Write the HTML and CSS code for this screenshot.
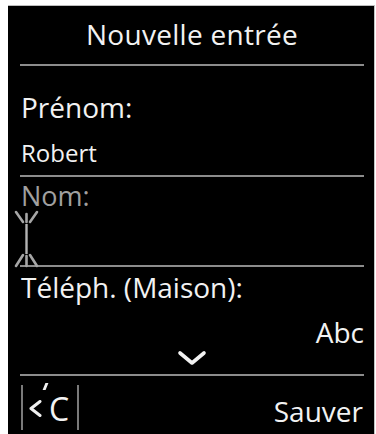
FILE: index.html
```html
<!DOCTYPE html>
<html lang="fr">
<head>
<meta charset="utf-8">
<link rel="stylesheet" href="styles.css">
</head>
<body>
<div class="screen">
  <div class="title">Nouvelle entrée</div>
  <div class="field field-first">
    <div class="label">Prénom:</div>
    <div class="value">Robert</div>
  </div>
  <div class="field field-active">
    <div class="label label-dim">Nom:</div>
    <svg class="cursor" width="30" height="58" viewBox="0 0 30 58">
      <path d="M2 2 L9 12 M23 2 L16 12 M12.5 4 L12.5 12" stroke="#a6a6a6" stroke-width="2.6" fill="none" stroke-linecap="round"/>
      <path d="M12.5 14 L12.5 44" stroke="#b4b4b4" stroke-width="2.4"/>
      <path d="M2 56 L9 45 M23 56 L16 45 M12.5 46 L12.5 56" stroke="#a6a6a6" stroke-width="2.6" fill="none" stroke-linecap="round"/>
    </svg>
  </div>
  <div class="field field-last">
    <div class="label">Téléph. (Maison):</div>
    <div class="mode">Abc</div>
    <div class="more">
      <svg width="30" height="16" viewBox="0 0 30 16"><path d="M3 3 L15 13 L27 3" stroke="#f2f2f2" stroke-width="3.6" fill="none" stroke-linecap="round" stroke-linejoin="round"/></svg>
    </div>
  </div>
  <div class="softkeys">
    <div class="backspace">
      <svg class="bs-arrow" width="13" height="17" viewBox="0 0 13 17"><path d="M11 1.5 L2 8.5 L11 15.5" stroke="#f0f0f0" stroke-width="3" fill="none" stroke-linecap="round" stroke-linejoin="round"/></svg>
      <span class="bs-c">C</span>
      <span class="bs-acc"></span>
    </div>
    <div class="save">Sauver</div>
  </div>
</div>
</body>
</html>
```
FILE: styles.css
```css
html, body {
  background: #ffffff;
}
body {
  margin: 5px 1px 0 8px;
  font-family: "Open Sans", "Liberation Sans", sans-serif;
  color: #f2f2f2;
}
.screen {
  background: #000;
  height: 429px;
  padding: 0 10px 0 12px;
  box-sizing: border-box;
  border-right: 1px solid #c4c4c4;
  border-top: 1px solid #bdbdbd;
}
.title {
  font-size: 28px;
  letter-spacing: 0.3px;
  text-align: center;
  line-height: 40px;
  padding: 8px 0 10px;
  border-bottom: 2px solid #8c8c8c;
}
.field {
  border-bottom: 2px solid #8c8c8c;
}
.label {
  font-size: 28px;
  line-height: 40px;
  padding-left: 1px;
}
.field-first {
  padding-top: 21px;
  padding-bottom: 6px;
}
.value {
  font-size: 24px;
  line-height: 32px;
  padding-left: 1px;
  margin-top: 10px;
}
.field-active {
  height: 90px;
  box-sizing: border-box;
  padding-top: 1px;
}
.label-dim {
  color: #a0a0a0;
  font-size: 27px;
  line-height: 36px;
}
.cursor {
  display: block;
  margin: -4px 0 0 -6px;
}
.field-last {
  height: 109px;
  box-sizing: border-box;
}
.mode {
  text-align: right;
  font-size: 28px;
  line-height: 40px;
  margin-top: 5px;
}
.more {
  display: flex;
  justify-content: center;
  height: 16px;
  margin-top: -2px;
}
.softkeys {
  display: flex;
  justify-content: space-between;
  align-items: flex-end;
  height: 56px;
}
.backspace {
  position: relative;
  display: flex;
  align-items: flex-start;
  box-sizing: border-box;
  width: 58px;
  height: 45px;
  margin: 0 0 2px 1px;
  border-left: 2px solid #7a7a7a;
  border-right: 2px solid #7a7a7a;
  padding-left: 6px;
}
.bs-arrow {
  display: block;
  margin-top: 15px;
}
.bs-c {
  font-size: 32px;
  line-height: 36px;
  margin: 6px 0 0 7px;
}
.bs-acc {
  position: absolute;
  left: 21px;
  top: -2px;
  width: 2.5px;
  height: 7px;
  background: #f0f0f0;
  transform: skewX(-22deg);
}
.save {
  font-size: 28px;
  line-height: 40px;
  margin-bottom: 1px;
  padding-right: 1px;
}
```
